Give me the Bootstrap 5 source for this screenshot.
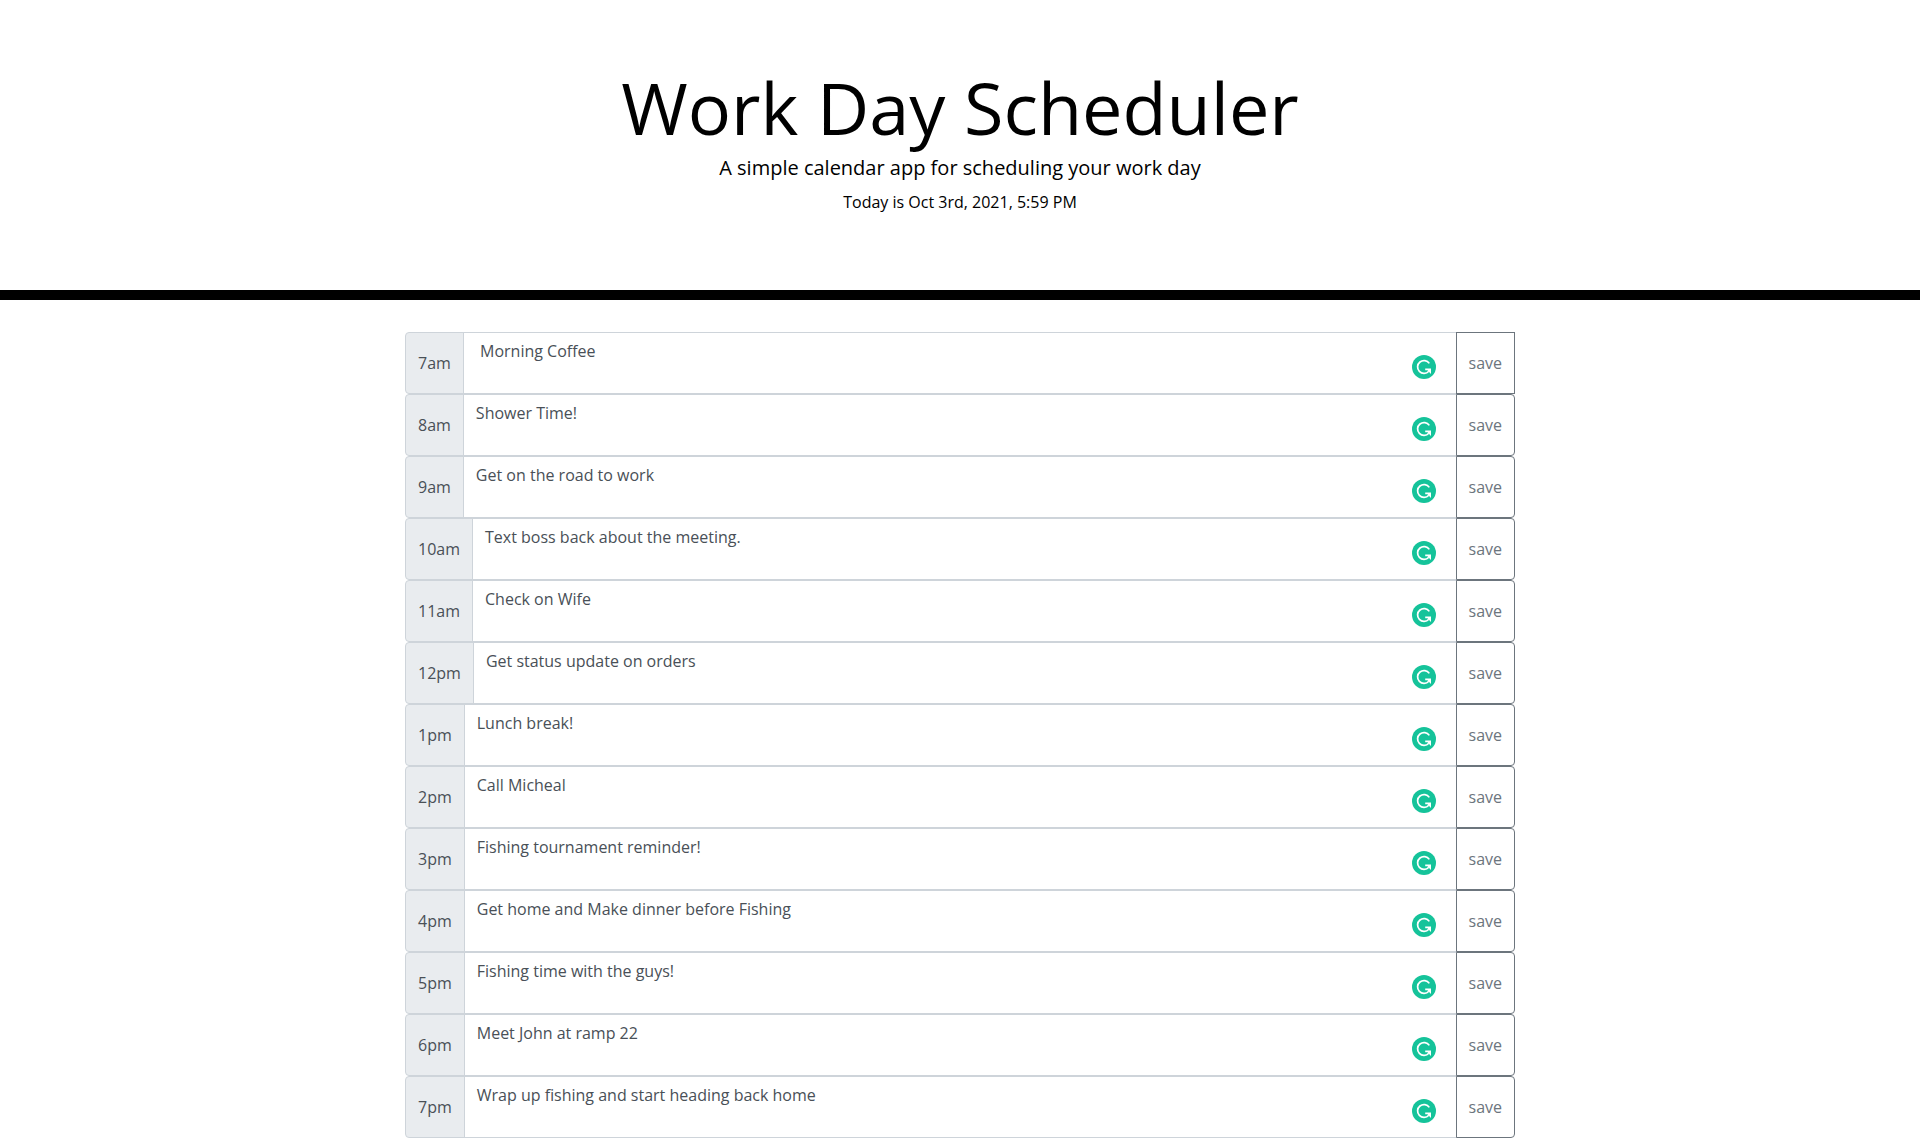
<!DOCTYPE html>
<html lang="en">
<head>
<meta charset="utf-8">
<meta name="viewport" content="width=device-width, initial-scale=1">
<title>Work Day Scheduler</title>
<link href="https://cdn.jsdelivr.net/npm/bootstrap@5.3.0/dist/css/bootstrap.min.css" rel="stylesheet">
<style>
  body { font-family: "Open Sans", sans-serif; font-size: 16px; line-height: 24px; color: #000; background: #fff; }
  .masthead { padding: 64px 32px; border-bottom: 10px solid #000; margin-bottom: 32px; }
  .masthead h1 { font-size: 72px; line-height: 86px; font-weight: 400; margin-bottom: 3px; }
  .tagline { font-size: 20px; line-height: 30px; margin-bottom: 7px; }
  .today { margin-bottom: 12px; }
  .planner { max-width: 1140px; padding: 0 15px; }
  .time-block { --bs-border-radius: 4px; --edge: #ced4da; }
  .time-block .input-group-text, .time-block .form-control {
    color: #495057; border: 1px solid var(--edge); font-size: 16px; line-height: 24px; padding: 6px 12px; }
  .time-block .input-group-text { background: #e9ecef; border-radius: 4px; }
  .time-block .form-control { height: 62px; resize: none; overflow: hidden; border-radius: 0; }
  .time-block .btn { --bs-btn-border-radius: 4px; --bs-btn-color: #6c757d; --bs-btn-border-color: #6c757d; padding: 6px 12px; font-size: 16px; line-height: 24px; }
  .time-block:first-child .btn { border-radius: 0; }
  .checker { width: 24px; height: 24px; right: 79px; top: 23px; z-index: 6; }
</style>
<script src="https://cdn.jsdelivr.net/npm/bootstrap@5.3.0/dist/js/bootstrap.bundle.min.js"></script>
</head>
<body>
<svg class="d-none" aria-hidden="true">
  <symbol id="checker-mark" viewBox="0 0 24 24">
    <circle cx="12" cy="12" r="12" fill="#15c39a"/>
    <path d="M17.3 8.4A6.4 6.4 0 1 0 16.8 16.2" fill="none" stroke="#fff" stroke-width="1.7"/>
    <path d="M13.2 13.5h5.8v5.4l-1.7-1.7-1.8-1.9h-2.3z" fill="#fff"/>
  </symbol>
</svg>
<header class="masthead text-center">
  <h1>Work Day Scheduler</h1>
  <p class="tagline">A simple calendar app for scheduling your work day</p>
  <p class="today">Today is Oct 3rd, 2021, 5:59 PM</p>
</header>
<main class="container planner" id="planner"></main>
<script>
  const hours = [
    ["7am", " Morning Coffee"],
    ["8am", "Shower Time!"],
    ["9am", "Get on the road to work"],
    ["10am", "Text boss back about the meeting."],
    ["11am", "Check on Wife"],
    ["12pm", "Get status update on orders"],
    ["1pm", "Lunch break!"],
    ["2pm", "Call Micheal"],
    ["3pm", "Fishing tournament reminder!"],
    ["4pm", "Get home and Make dinner before Fishing"],
    ["5pm", "Fishing time with the guys!"],
    ["6pm", "Meet John at ramp 22"],
    ["7pm", "Wrap up fishing and start heading back home"]
  ];
  document.getElementById("planner").innerHTML = hours.map(([hour, plan]) => `
    <div class="input-group time-block position-relative">
      <label class="input-group-text" for="plan-${hour}">${hour}</label>
      <textarea class="form-control" id="plan-${hour}" spellcheck="false">${plan}</textarea>
      <svg class="checker position-absolute" aria-hidden="true"><use href="#checker-mark"/></svg>
      <button class="btn btn-outline-secondary" type="button">save</button>
    </div>`).join("");
</script>
</body>
</html>
